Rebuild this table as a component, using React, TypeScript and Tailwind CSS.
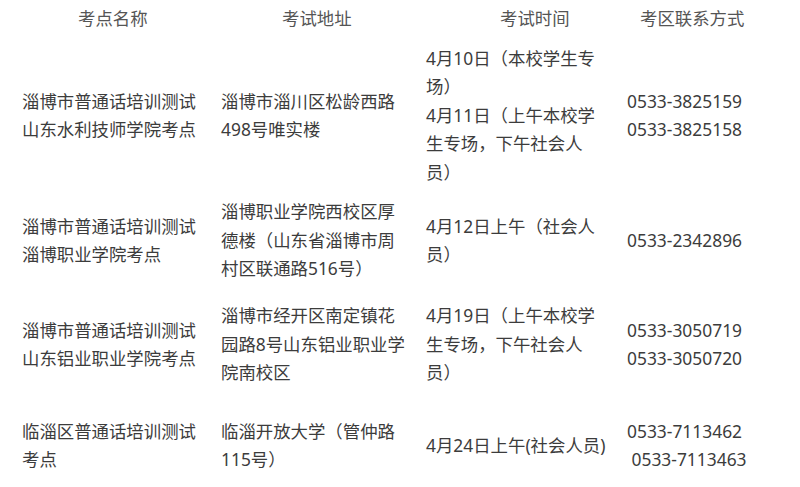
import React from 'react';

type Row = { h: string; name: string[]; addr: string[]; time: string[]; tel: string[] };

const rows: Row[] = [
  {
    h: 'h-[158px]',
    name: ['淄博市普通话培训测试', '山东水利技师学院考点'],
    addr: ['淄博市淄川区松龄西路', '498号唯实楼'],
    time: ['4月10日（本校学生专', '场）', '4月11日（上午本校学', '生专场，下午社会人', '员）'],
    tel: ['0533-3825159', '0533-3825158'],
  },
  {
    h: 'h-[92px]',
    name: ['淄博市普通话培训测试', '淄博职业学院考点'],
    addr: ['淄博职业学院西校区厚', '德楼（山东省淄博市周', '村区联通路516号）'],
    time: ['4月12日上午（社会人', '员）'],
    tel: ['0533-2342896'],
  },
  {
    h: 'h-[116px]',
    name: ['淄博市普通话培训测试', '山东铝业职业学院考点'],
    addr: ['淄博市经开区南定镇花', '园路8号山东铝业职业学', '院南校区'],
    time: ['4月19日（上午本校学', '生专场，下午社会人', '员）'],
    tel: ['0533-3050719', '0533-3050720'],
  },
  {
    h: 'h-[86px]',
    name: ['临淄区普通话培训测试', '考点'],
    addr: ['临淄开放大学（管仲路', '115号）'],
    time: ['4月24日上午(社会人员)'],
    tel: ['0533-7113462', '\u00a00533-7113463'],
  },
];

const Cell = ({ lines }: { lines: string[] }) => (
  <div className="flex flex-col justify-center">
    {lines.map((l, i) => (
      <div key={i} className="whitespace-nowrap leading-[28.5px]">{l}</div>
    ))}
  </div>
);

export default function App() {
  return (
    <div
      className="w-[800px] h-[487px] overflow-hidden bg-white text-[17.4px] text-[#3c3c3c] pl-[22px]"
      style={{ fontFamily: '"Noto Sans", "Noto Sans CJK SC", sans-serif' }}
    >
      <div className="grid grid-cols-[199px_205px_201px_1fr] h-[36px] items-center text-[#555555]">
        <div className="pl-[56px]">考点名称</div>
        <div className="pl-[61px]">考试地址</div>
        <div className="pl-[74px]">考试时间</div>
        <div className="pl-[13px]">考区联系方式</div>
      </div>
      {rows.map((r, i) => (
        <div key={i} className={`grid grid-cols-[199px_205px_201px_1fr] ${r.h}`}>
          <Cell lines={r.name} />
          <Cell lines={r.addr} />
          <Cell lines={r.time} />
          <Cell lines={r.tel} />
        </div>
      ))}
    </div>
  );
}
